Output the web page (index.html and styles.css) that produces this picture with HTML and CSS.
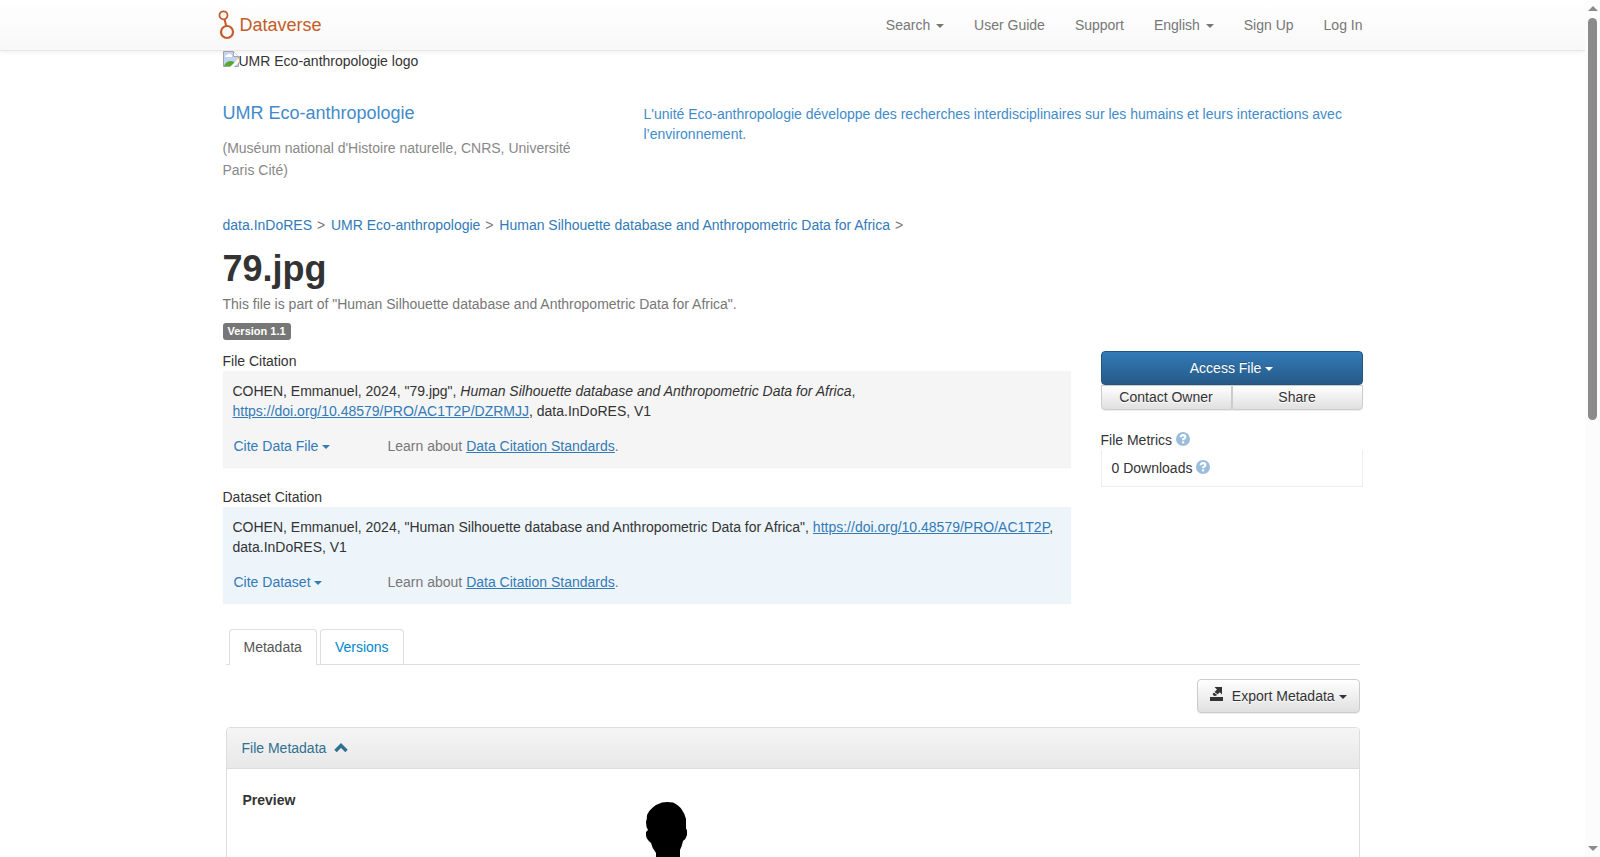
FILE: index.html
```html
<!DOCTYPE html>
<html lang="en">
  <head>
    <meta charset="UTF-8" />
    <meta name="viewport" content="width=device-width, initial-scale=1.0" />
    <title>79.jpg - UMR Eco-anthropologie</title>
    <link rel="stylesheet" href="styles.css">
  </head>
  <body>
    <div class="page">
      <nav class="navbar">
        <div class="container navbar-inner">
          <a href="#" class="brand">
            <svg width="18" height="30" viewBox="0 0 18 30" fill="none" stroke="#c55b28">
              <circle cx="5.5" cy="5.3" r="4" stroke-width="1.8" />
              <path d="M6.6 9.4 L8.2 16" stroke-width="2" />
              <circle cx="9" cy="22" r="6" stroke-width="2.2" />
            </svg>
            Dataverse
          </a>
          <ul class="nav">
            <li><a href="#">Search <span class="caret"></span></a></li>
            <li><a href="#">User Guide</a></li>
            <li><a href="#">Support</a></li>
            <li><a href="#">English <span class="caret"></span></a></li>
            <li><a href="#">Sign Up</a></li>
            <li><a href="#">Log In</a></li>
          </ul>
        </div>
      </nav>

      <div class="container">
        <div class="logo">
          <svg width="16" height="16" viewBox="0 0 16 16">
            <path d="M.5 .5h10l5 5v10h-15z" fill="#c3d4f3" stroke="#a3a3a3" />
            <path d="M2 6q0-2 2-2 1-2 3-1 2 0 2 3z" fill="#fff" />
            <path d="M1 15q2-5 7-5 4 0 5 5z" fill="#58a934" />
            <path d="M10.500 .5v5h5" fill="#fff" stroke="#a3a3a3" />
            <path d="M16 7L7 16h4l5-5z" fill="#fff" />
          </svg><span>UMR Eco-anthropologie logo</span>
        </div>

        <header class="dataverse-head">
          <div class="dataverse-name">
            <a href="#">UMR Eco-anthropologie</a>
            <p>(Muséum national d'Histoire naturelle, CNRS, Université Paris Cité)</p>
          </div>
          <a href="#" class="tagline">L'unité Eco-anthropologie développe des recherches interdisciplinaires sur les humains et leurs interactions avec l’environnement.</a>
        </header>

        <div class="breadcrumb">
          <a href="#">data.InDoRES</a>
          <span>&gt;</span>
          <a href="#">UMR Eco-anthropologie</a>
          <span>&gt;</span>
          <a href="#">Human Silhouette database and Anthropometric Data for Africa</a>
          <span>&gt;</span>
        </div>

        <h1>79.jpg</h1>
        <p class="part-of">This file is part of "Human Silhouette database and Anthropometric Data for Africa".</p>
        <span class="label">Version 1.1</span>

        <div class="row">
          <main class="citations">
            <section class="citation">
              <h2>File Citation</h2>
              <div class="well">
                <p>COHEN, Emmanuel, 2024, "79.jpg", <i>Human Silhouette database and Anthropometric Data for Africa</i>, <a href="#">https://doi.org/10.48579/PRO/AC1T2P/DZRMJJ</a>, data.InDoRES, V1</p>
                <div class="cite-row">
                  <button type="button" class="cite">Cite Data File <span class="caret"></span></button>
                  <span>Learn about <a href="#">Data Citation Standards</a>.</span>
                </div>
              </div>
            </section>
            <section class="citation">
              <h2>Dataset Citation</h2>
              <div class="well info">
                <p>COHEN, Emmanuel, 2024, "Human Silhouette database and Anthropometric Data for Africa", <a href="#">https://doi.org/10.48579/PRO/AC1T2P</a>, data.InDoRES, V1</p>
                <div class="cite-row">
                  <button type="button" class="cite">Cite Dataset <span class="caret"></span></button>
                  <span>Learn about <a href="#">Data Citation Standards</a>.</span>
                </div>
              </div>
            </section>
          </main>

          <aside class="side">
            <button type="button" class="btn btn-primary">Access File <span class="caret"></span></button>
            <div class="btn-group">
              <button type="button" class="btn">Contact Owner</button>
              <button type="button" class="btn">Share</button>
            </div>
            <h2>File Metrics
              <svg class="help" width="14" height="14" viewBox="0 0 14 14">
                <circle cx="7" cy="7" r="7" fill="#9bbddc" />
                <path d="M4.700 5.300Q4.700 3.200 7 3.200T9.300 5.200Q9.300 6.500 7.200 7.200V8.300" fill="none" stroke="#fff" stroke-width="2.200" />
                <path d="M6 9.400h2.200v2H6z" fill="#fff" />
              </svg>
            </h2>
            <div class="metrics">0 Downloads
              <svg class="help" width="14" height="14" viewBox="0 0 14 14">
                <circle cx="7" cy="7" r="7" fill="#9bbddc" />
                <path d="M4.700 5.300Q4.700 3.200 7 3.200T9.300 5.200Q9.300 6.500 7.200 7.200V8.300" fill="none" stroke="#fff" stroke-width="2.200" />
                <path d="M6 9.400h2.200v2H6z" fill="#fff" />
              </svg>
            </div>
          </aside>
        </div>

        <div class="tabview">
          <div class="tabs">
            <a href="#" class="tab active">Metadata</a>
            <a href="#" class="tab">Versions</a>
          </div>

          <div class="toolbar">
            <button type="button" class="btn btn-export">
              <svg width="14" height="14" viewBox="0 0 14 14" fill="#333">
                <path d="M0 10h13v4H0z" />
                <path d="M4.500 0H12v7.500L9.700 5.300 6.500 8.500Q4.500 9.500 3 8q-1-1.500 1-2.500L7 2.400z" />
                <path d="M3 4.500L8 8" stroke="#f4f4f4" fill="none" />
              </svg>
              Export Metadata <span class="caret"></span>
            </button>
          </div>

          <section class="panel">
            <a href="#" class="panel-heading">File Metadata
              <svg width="14" height="10" viewBox="0 0 14 10">
                <path d="M1.500 8L7 2.500 12.500 8" fill="none" stroke="#31708f" stroke-width="3.400" />
              </svg>
            </a>
            <div class="panel-body">
              <b>Preview</b>
              <svg class="preview" width="400" height="400" viewBox="0 0 400 400">
                <path transform="translate(128 12)" d="M16 .5Q21-.5 27 .5Q33 3 36 8Q39 12 40 17V27Q41 27 41 29V33Q40 37 37 39Q36 44 34 48L34 60Q44 70 72 74L92 388H-50L-28 74Q0 70 10 60V51Q6 46 5 41Q0 37 0 33V30L2 28Q0 25 0 20Q1 17 1 13Q5 4 16 .5z" />
              </svg>
            </div>
          </section>
        </div>
      </div>
    </div>

    <div class="scrollbar">
      <i class="arrow-up"></i>
      <div class="track"><div class="thumb"></div></div>
      <i class="arrow-down"></i>
    </div>
  </body>
</html>
```
FILE: styles.css
```css
* {
  margin: 0;
  padding: 0;
  box-sizing: border-box;
}

body {
  display: flex;
  height: 100vh;
  overflow: hidden;
  font-family: "Liberation Sans", Arial, sans-serif;
  font-size: 14px;
  line-height: 20px;
  color: #333;
  background: #fff;
}

a {
  color: #337ab7;
  text-decoration: none;
}

button {
  font: inherit;
  cursor: pointer;
}

h2 {
  font-size: 14px;
  font-weight: normal;
}

.page {
  flex: 1;
  overflow: hidden;
}

.container {
  max-width: 1170px;
  margin: 0 auto;
  padding: 0 15px;
}

.caret {
  display: inline-block;
  vertical-align: middle;
  border-top: 4px solid;
  border-left: 4px solid transparent;
  border-right: 4px solid transparent;
}

/* navbar */
.navbar {
  border-bottom: 1px solid #e7e7e7;
  background: linear-gradient(#fff, #f8f8f8);
  box-shadow: 0 1px 5px rgba(0, 0, 0, 0.075);
}

.navbar-inner {
  display: flex;
  justify-content: space-between;
  align-items: center;
  height: 50px;
  padding: 0 0 0 10px;
}

.brand {
  display: flex;
  align-items: center;
  gap: 4px;
  font-size: 18px;
  color: #c55b28;
}

.nav {
  display: flex;
  list-style: none;
}

.nav a {
  display: block;
  padding: 15px;
  color: #777;
}

.nav .caret {
  margin-left: 2px;
}

/* dataverse header */
.logo {
  display: flex;
  height: 52px;
}

.dataverse-head {
  display: flex;
  gap: 60px;
  padding-bottom: 34px;
}

.dataverse-name {
  width: 361px;
}

.dataverse-name a {
  font-size: 18px;
  color: #428bca;
}

.dataverse-name p {
  margin-top: 13px;
  line-height: 22px;
  color: #888;
}

.tagline {
  flex: 1;
  padding-top: 1px;
  color: #428bca;
}

.breadcrumb span {
  margin: 0 2px 0 1px;
  color: #777;
}

h1 {
  margin-top: 14px;
  font-size: 36px;
  line-height: 40px;
}

.part-of {
  margin-top: 5px;
  color: #777;
}

.label {
  display: block;
  width: fit-content;
  margin-top: 9px;
  padding: 0 5px;
  border-radius: 3px;
  font-size: 11px;
  font-weight: bold;
  line-height: 17px;
  color: #fff;
  background: #777;
}

/* citations */
.row {
  display: flex;
  gap: 30px;
  margin-top: 11px;
}

.citations {
  flex: 1;
}

.citation {
  margin-bottom: 20px;
}

.well {
  padding: 10px;
  background: #f5f5f5;
  box-shadow: 0 1px 1px rgba(0, 0, 0, 0.05);
}

.citation .well {
  padding-bottom: 11px;
}

.well.info {
  background: #edf5fb;
}

.well a {
  text-decoration: underline;
}

.cite-row {
  display: flex;
  margin-top: 15px;
  color: #777;
}

.cite {
  width: 155px;
  padding-left: 1px;
  border: 0;
  text-align: left;
  color: #337ab7;
  background: none;
}

/* right column */
.side {
  width: 262px;
}

.btn {
  padding: 6px 12px;
  border: 1px solid #ccc;
  border-radius: 4px;
  color: #333;
  text-shadow: 0 1px 0 #fff;
  background: linear-gradient(#fff, #e0e0e0);
  box-shadow: 0 1px 1px rgba(0, 0, 0, 0.075);
}

.btn-primary {
  display: block;
  width: 100%;
  border-color: #245580;
  color: #fff;
  text-shadow: 0 -1px 0 rgba(0, 0, 0, 0.2);
  background: linear-gradient(#337ab7, #265a88);
}

.btn-group {
  display: flex;
}

.btn-group .btn {
  flex: 1;
  padding: 1px 0 2px;
  border-radius: 0 0 4px 0;
}

.btn-group .btn:first-child {
  border-radius: 0 0 0 4px;
}

.side h2 {
  margin-top: 20px;
}

.help {
  vertical-align: -1px;
}

.metrics {
  padding: 8px 10px;
  border: 1px solid #eee;
  border-top: 0;
}

/* tabs */
.tabview {
  margin: 6px 3px 0;
}

.tabs {
  display: flex;
  gap: 3px;
  padding-left: 3px;
  border-bottom: 1px solid #ddd;
}

.tab {
  padding: 7px 14px;
  border: 1px solid #ddd;
  border-bottom: 0;
  border-radius: 4px 4px 0 0;
  color: #0088cc;
}

.tab.active {
  margin-bottom: -1px;
  padding-bottom: 8px;
  color: #555;
  background: #fff;
}

.toolbar {
  display: flex;
  justify-content: flex-end;
  padding: 14px 0;
}

.btn-export svg {
  margin-right: 4px;
}

/* metadata panel */
.panel {
  border: 1px solid #ddd;
  border-radius: 4px;
}

.panel-heading {
  display: block;
  padding: 10px 15px;
  border-bottom: 1px solid #ddd;
  border-radius: 3px 3px 0 0;
  color: #31708f;
  background: linear-gradient(#f5f5f5, #e8e8e8);
}

.panel-heading svg {
  margin-left: 4px;
}

.panel-body {
  display: grid;
  grid-template-columns: 1fr 3fr;
  padding: 21px 16px;
}

/* scrollbar */
.scrollbar {
  display: flex;
  flex-direction: column;
  align-items: center;
  width: 15px;
  padding: 6px 0;
  background: #fcfcfc;
}

.track {
  flex: 1;
  width: 9px;
  margin: 7px 0;
}

.thumb {
  height: 49%;
  border-radius: 5px;
  background: #8b8b8b;
}

.arrow-up,
.arrow-down {
  border: 5px solid transparent;
  border-top: 0;
  border-bottom-color: #8b8b8b;
}

.arrow-down {
  border: 5px solid transparent;
  border-bottom: 0;
  border-top-color: #8b8b8b;
}
```
